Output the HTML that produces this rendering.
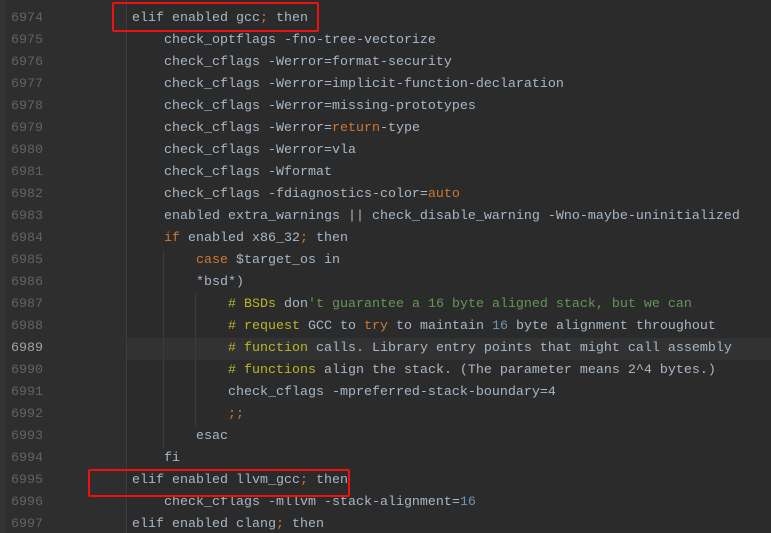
<!DOCTYPE html>
<html style="overflow:hidden"><head><meta charset="utf-8"><style>
html,body{overflow:hidden}
body{margin:0;width:771px;height:533px;background:#2b2b2b;position:relative;font-family:"Liberation Mono",monospace;font-size:13.33px;color:#a9b7c6}
.g{position:absolute;left:0;top:0;width:126px;height:533px;background:#2e2e2e}
.s{position:absolute;left:0;top:0;width:6px;height:533px;background:#313335}
.sep{position:absolute;left:126px;top:0;width:1px;height:533px;background:#3c3c3c}
.w{position:absolute;left:0;top:2px;width:771px;height:531px;overflow:hidden}
.l{position:absolute;left:0;height:22px;line-height:22px;white-space:pre;width:771px}
.n{position:absolute;left:11px;color:#606366}
.c{position:absolute;left:132px}
.k{color:#cc7832}.y{color:#bbb529}.m{color:#629755}.b{color:#6897bb}
.hl{position:absolute;left:127px;width:644px;height:22px;background:#323232}
.ig{position:absolute;width:1px;background:#3b3b3b}
.box{position:absolute;border:2px solid #f01010;border-radius:2px}
</style></head><body>
<div class="g"></div><div class="s"></div><div class="sep"></div>
<div class="w">
<div class="hl" style="top:336px"></div>
<div class="ig" style="left:163px;top:248px;height:198px"></div>
<div class="ig" style="left:195px;top:292px;height:132px"></div>
<div class="l" style="top:6px"><span class="n">6974</span><span class="c">elif enabled gcc<span class="k">;</span> then</span></div>
<div class="l" style="top:28px"><span class="n">6975</span><span class="c">    check_optflags -fno-tree-vectorize</span></div>
<div class="l" style="top:50px"><span class="n">6976</span><span class="c">    check_cflags -Werror=format-security</span></div>
<div class="l" style="top:72px"><span class="n">6977</span><span class="c">    check_cflags -Werror=implicit-function-declaration</span></div>
<div class="l" style="top:94px"><span class="n">6978</span><span class="c">    check_cflags -Werror=missing-prototypes</span></div>
<div class="l" style="top:116px"><span class="n">6979</span><span class="c">    check_cflags -Werror=<span class="k">return</span>-type</span></div>
<div class="l" style="top:138px"><span class="n">6980</span><span class="c">    check_cflags -Werror=vla</span></div>
<div class="l" style="top:160px"><span class="n">6981</span><span class="c">    check_cflags -Wformat</span></div>
<div class="l" style="top:182px"><span class="n">6982</span><span class="c">    check_cflags -fdiagnostics-color=<span class="k">auto</span></span></div>
<div class="l" style="top:204px"><span class="n">6983</span><span class="c">    enabled extra_warnings || check_disable_warning -Wno-maybe-uninitialized</span></div>
<div class="l" style="top:226px"><span class="n">6984</span><span class="c">    <span class="k">if</span> enabled x86_32<span class="k">;</span> then</span></div>
<div class="l" style="top:248px"><span class="n">6985</span><span class="c">        <span class="k">case</span> $target_os in</span></div>
<div class="l" style="top:270px"><span class="n">6986</span><span class="c">        *bsd*)</span></div>
<div class="l" style="top:292px"><span class="n">6987</span><span class="c">            <span class="y"># BSDs</span> don<span class="m">'t guarantee a 16 byte aligned stack, but we can</span></span></div>
<div class="l" style="top:314px"><span class="n">6988</span><span class="c">            <span class="y"># request</span> GCC to <span class="k">try</span> to maintain <span class="b">16</span> byte alignment throughout</span></div>
<div class="l" style="top:336px"><span class="n" style="color:#a4a3a3">6989</span><span class="c">            <span class="y"># function</span> calls. Library entry points that might call assembly</span></div>
<div class="l" style="top:358px"><span class="n">6990</span><span class="c">            <span class="y"># functions</span> align the stack. (The parameter means 2^4 bytes.)</span></div>
<div class="l" style="top:380px"><span class="n">6991</span><span class="c">            check_cflags -mpreferred-stack-boundary=4</span></div>
<div class="l" style="top:402px"><span class="n">6992</span><span class="c">            <span class="k">;;</span></span></div>
<div class="l" style="top:424px"><span class="n">6993</span><span class="c">        esac</span></div>
<div class="l" style="top:446px"><span class="n">6994</span><span class="c">    fi</span></div>
<div class="l" style="top:468px"><span class="n">6995</span><span class="c">elif enabled llvm_gcc<span class="k">;</span> then</span></div>
<div class="l" style="top:490px"><span class="n">6996</span><span class="c">    check_cflags -mllvm -stack-alignment=<span class="b">16</span></span></div>
<div class="l" style="top:512px"><span class="n">6997</span><span class="c">elif enabled clang<span class="k">;</span> then</span></div>
</div>
<div class="box" style="left:112px;top:2px;width:203px;height:26px"></div>
<div class="box" style="left:88px;top:469px;width:258px;height:24px"></div>
</body></html>
